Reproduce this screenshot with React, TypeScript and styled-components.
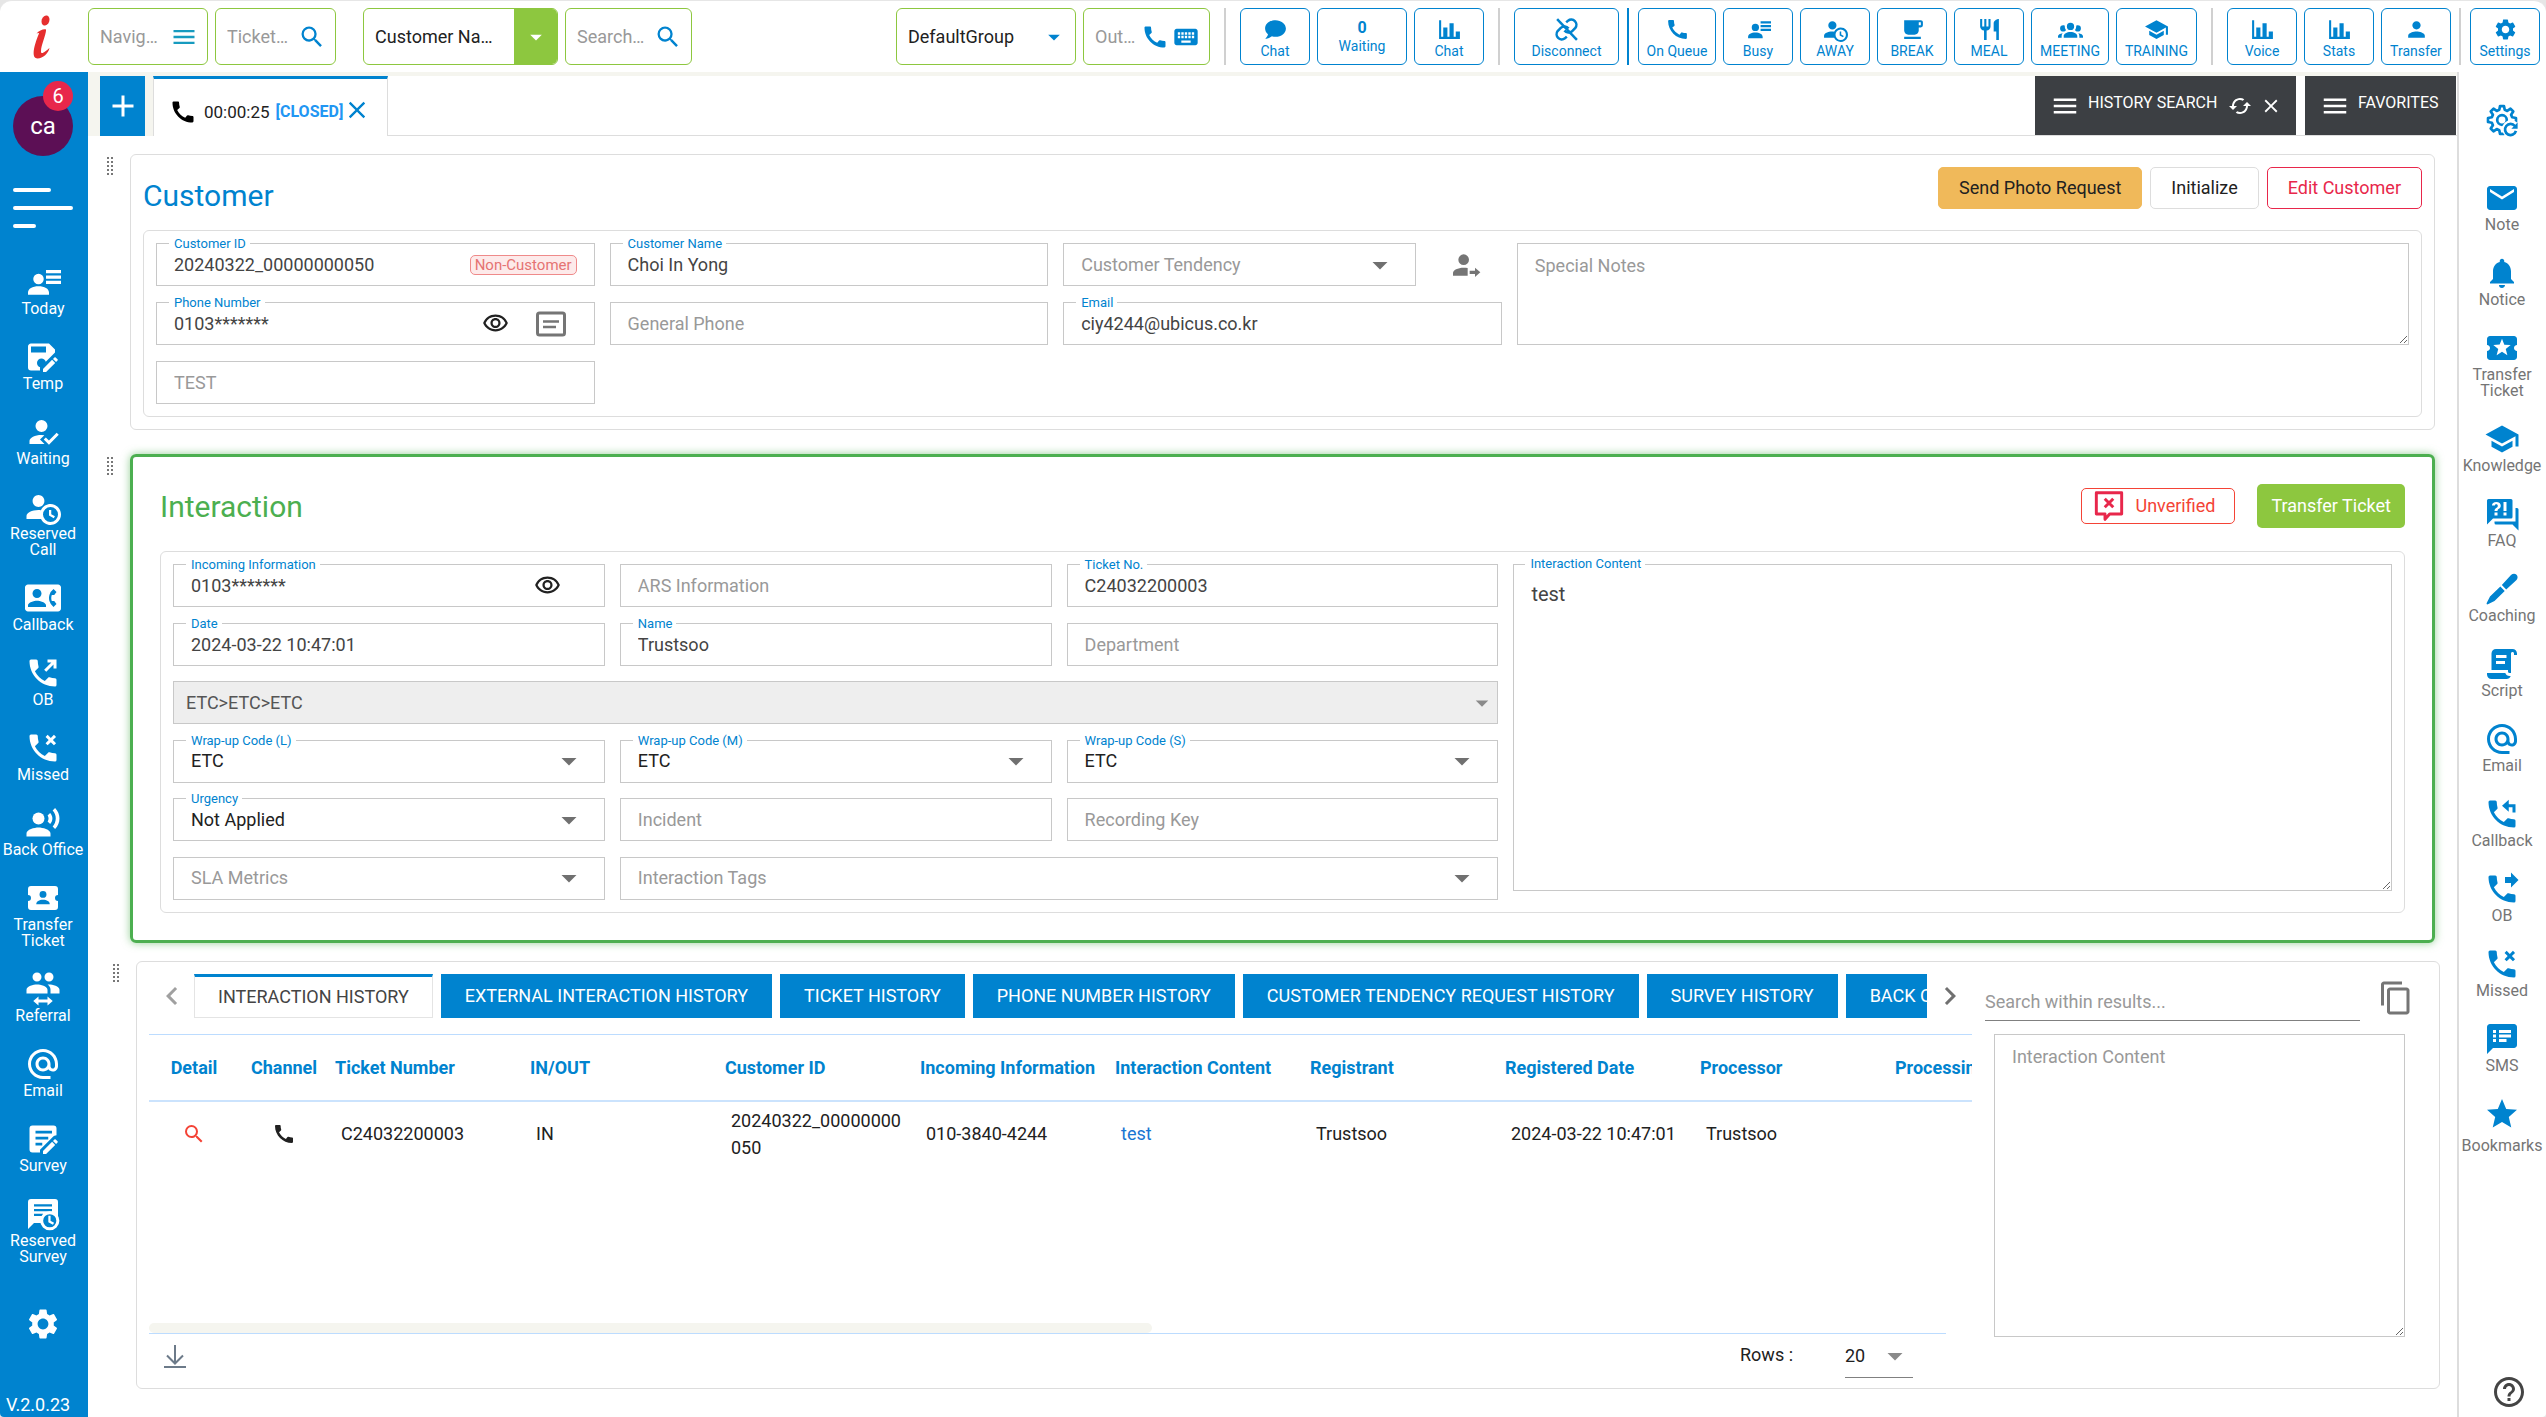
import React, { useId } from "react";
import styled, { createGlobalStyle, css } from "styled-components";
import {
  MdAdd,
  MdAlternateEmail,
  MdArrowDropDown,
  MdCached,
  MdCall,
  MdClose,
  MdContactPhone,
  MdContentCopy,
  MdEmail,
  MdHelpOutline,
  MdKeyboard,
  MdLocalActivity,
  MdLocalCafe,
  MdMenu,
  MdNotifications,
  MdOutlineVisibility,
  MdPerson,
  MdRecordVoiceOver,
  MdRestaurant,
  MdSearch,
  MdSettings,
  MdSpeakerNotes,
  MdStar,
  MdChevronLeft,
  MdChevronRight,
} from "react-icons/md";

const BLUE = "#0083cf";
const LIME = "#8dc73f";
const GREEN = "#4caf50";
const RED = "#e8274b";
const BEIGE = "#f5f5ef";
const LINE = "#dddddd";
const FIELD = "#c8c8c8";

const GlobalStyle = createGlobalStyle`
  * { box-sizing: border-box; }
  body {
    margin: 0;
    background: #e6e6e6;
    color: #212121;
    font-family: Roboto, "Liberation Sans", sans-serif;
    font-size: 18px;
    line-height: 24px;
  }
  button, input, select, textarea { font: inherit; color: inherit; margin: 0; }
  button { cursor: pointer; padding: 0; border: 0; background: none; }
  svg { display: block; flex: none; }
`;

/* ---------- icons ---------- */

const PHONE =
  "M20,15.5C18.8,15.5 17.5,15.3 16.4,14.9H16.1C15.8,14.9 15.6,15 15.4,15.2L13.2,17.4C10.4,15.9 8,13.6 6.6,10.8L8.8,8.6C9.1,8.3 9.2,7.9 9,7.6C8.7,6.5 8.5,5.2 8.5,4A1,1 0 0,0 7.5,3H4A1,1 0 0,0 3,4C3,13.4 10.6,21 20,21A1,1 0 0,0 21,20V16.5A1,1 0 0,0 20,15.5Z";
const PENCIL =
  "M20.04,12.13C19.9,12.13 19.76,12.19 19.65,12.3L18.65,13.3L20.7,15.35L21.7,14.35C21.92,14.14 21.92,13.79 21.7,13.58L20.42,12.3C20.31,12.19 20.18,12.13 20.04,12.13M18.07,13.88L12,19.94V22H14.06L20.12,15.93L18.07,13.88Z";
const TICKET =
  "M4,4A2,2 0 0,0 2,6V10A2,2 0 0,1 4,12A2,2 0 0,1 2,14V18A2,2 0 0,0 4,20H20A2,2 0 0,0 22,18V14A2,2 0 0,1 20,12A2,2 0 0,1 22,10V6A2,2 0 0,0 20,4H4Z";

const paths = {
  chat: "M12,3C17.5,3 22,6.58 22,11C22,15.42 17.5,19 12,19C10.76,19 9.57,18.82 8.47,18.5C5.55,21 2,21 2,21C4.33,18.67 4.7,17.1 4.75,16.5C3.05,15.07 2,13.13 2,11C2,6.58 6.5,3 12,3Z",
  chart: "M22,21H2V3H4V19H6V10H10V19H12V6H16V19H18V14H22V21Z",
  details:
    "M9,6.5A3.5,3.5 0 0,1 9,13.5A3.5,3.5 0 0,1 9,6.5M2,20.5V19C2,16.4 5,14.8 9,14.8C13,14.8 16,16.4 16,19V20.5ZM14,4H24V6.2H14ZM14,7.6H24V9.8H14ZM14,11.2H24V13.4H14Z",
  accountClock:
    "M10.63,14.1C12.23,10.58 16.38,9.03 19.9,10.63C23.42,12.23 24.97,16.38 23.37,19.9C22.24,22.4 19.75,24 17,24C14.3,24 11.83,22.44 10.67,20H1V18C1.06,16.86 1.84,15.93 3.34,15.18C4.84,14.43 6.72,14.04 9,14C9.57,14 10.11,14.05 10.63,14.1V14.1M9,4C10.12,4.03 11.06,4.42 11.81,5.17C12.56,5.92 12.93,6.86 12.93,8C12.93,9.14 12.56,10.08 11.81,10.83C11.06,11.58 10.12,11.95 9,11.95C7.88,11.95 6.94,11.58 6.19,10.83C5.44,10.08 5.07,9.14 5.07,8C5.07,6.86 5.44,5.92 6.19,5.17C6.94,4.42 7.88,4.03 9,4M17,22A5,5 0 0,0 22,17A5,5 0 0,0 17,12A5,5 0 0,0 12,17A5,5 0 0,0 17,22M16,14H17.5V16.82L19.94,18.23L19.19,19.53L16,17.69V14Z",
  accountCheck:
    "M21.1,12.5L22.5,13.91L15.97,20.5L12.5,17L13.9,15.59L15.97,17.67L21.1,12.5M10,17L13,20H3V18C3,15.79 6.58,14 11,14L12.89,14.11L10,17M11,4A4,4 0 0,1 15,8A4,4 0 0,1 11,12A4,4 0 0,1 7,8A4,4 0 0,1 11,4Z",
  accountArrow:
    "M11,4A4,4 0 0,1 11,12A4,4 0 0,1 11,4M14,14.3V20H3V18C3,15.8 6.6,14 11,14C12,14 13.1,14.1 14,14.3M19.5,14L23.5,17.5L19.5,21V18.7H15.5V16.3H19.5Z",
  group:
    "M12,5.5A3.5,3.5 0 0,1 15.5,9A3.5,3.5 0 0,1 12,12.5A3.5,3.5 0 0,1 8.5,9A3.5,3.5 0 0,1 12,5.5M5,8C5.56,8 6.08,8.15 6.53,8.42C6.38,9.85 6.8,11.27 7.66,12.38C7.16,13.34 6.16,14 5,14A3,3 0 0,1 2,11A3,3 0 0,1 5,8M19,8A3,3 0 0,1 22,11A3,3 0 0,1 19,14C17.84,14 16.84,13.34 16.34,12.38C17.2,11.27 17.62,9.85 17.47,8.42C17.92,8.15 18.44,8 19,8M5.5,18.25C5.5,16.18 8.41,14.5 12,14.5C15.59,14.5 18.5,16.18 18.5,18.25V20H5.5V18.25M0,20V18.5C0,17.11 1.89,15.94 4.45,15.6C3.86,16.28 3.5,17.22 3.5,18.25V20H0M24,20H20.5V18.25C20.5,17.22 20.14,16.28 19.55,15.6C22.11,15.94 24,17.11 24,18.5V20Z",
  school: "M12,3L1,9L12,15L21,10.09V17H23V9M5,13.18V17.18L12,21L19,17.18V13.18L12,17L5,13.18Z",
  saveEdit:
    "M10,19L10.14,18.86C8.9,18.5 8,17.36 8,16A3,3 0 0,1 11,13C12.36,13 13.5,13.9 13.86,15.14L20,9V7L16,3H4C2.89,3 2,3.9 2,5V19A2,2 0 0,0 4,21H10V19M4,5H14V9H4V5" + PENCIL,
  phoneOut: PHONE + "M15,3V5H17.59L12.76,9.83L14.17,11.24L19,6.41V9H21V3H15Z",
  phoneMissed:
    PHONE +
    "M15.1,3.2L17.2,5.3L19.3,3.2L20.7,4.6L18.6,6.7L20.7,8.8L19.3,10.2L17.2,8.1L15.1,10.2L13.7,8.8L15.8,6.7L13.7,4.6Z",
  phoneReturn: PHONE + "M16.5,2.5V5.5H21V11H19V7.5H16.5V10.5L12,6.5Z",
  phoneForward: PHONE + "M18,11L23,6L18,1V4H14V8H18V11Z",
  accountSwitch:
    "M16,9C18.33,9 23,10.17 23,12.5V15H17V12.5C17,11 16.19,9.89 15.04,9.05L16,9M8,9C10.33,9 15,10.17 15,12.5V15H1V12.5C1,10.17 5.67,9 8,9M8,7A3,3 0 0,1 5,4A3,3 0 0,1 8,1A3,3 0 0,1 11,4A3,3 0 0,1 8,7M16,7A3,3 0 0,1 13,4A3,3 0 0,1 16,1A3,3 0 0,1 19,4A3,3 0 0,1 16,7M9,17V19H15V17L18.5,20L15,23V21H9V23L5.5,20L9,17Z",
  noteEdit:
    "M5,3H19A2,2 0 0,1 21,5V9.5C20,9.6 19.2,10 18.5,10.7L10,19.1V21H5A2,2 0 0,1 3,19V5A2,2 0 0,1 5,3M7,6.5V8.3H18V6.5ZM7,10.5V12.3H15.5V10.5ZM7,14.5V16.3H11.5V14.5Z" + PENCIL,
  faq: "M18,15H6L2,19V3A1,1 0 0,1 3,2H18A1,1 0 0,1 19,3V14A1,1 0 0,1 18,15M23,9V23L19,19H8A1,1 0 0,1 7,18V17H21V8H22A1,1 0 0,1 23,9M8.19,4C7.32,4 6.62,4.2 6.08,4.59C5.56,5 5.3,5.57 5.31,6.36L5.32,6.39H7.25C7.26,6.09 7.35,5.86 7.53,5.7C7.71,5.55 7.93,5.47 8.19,5.47C8.5,5.47 8.76,5.57 8.94,5.75C9.12,5.94 9.2,6.2 9.2,6.5C9.2,6.82 9.13,7.09 8.97,7.32C8.83,7.55 8.62,7.75 8.36,7.91C7.85,8.25 7.5,8.55 7.31,8.82C7.11,9.08 7,9.5 7,10H9C9,9.69 9.04,9.44 9.13,9.26C9.22,9.08 9.39,8.9 9.64,8.74C10.09,8.5 10.46,8.21 10.75,7.81C11.04,7.41 11.19,7 11.19,6.5C11.19,5.74 10.92,5.13 10.38,4.68C9.85,4.23 9.12,4 8.19,4M7,11V13H9V11H7M13,13H15V11H13V13M13,4V10H15V4H13Z",
  pen: "M11.9,9.4L18,2.7C19.1,1.6 20.7,1.5 21.7,2.5C22.7,3.5 22.6,5.1 21.5,6.2L14.8,12.3ZM10.9,10.4L13.8,13.3L7,20L2.6,22.2C1.9,22.4 1.6,22.1 1.8,21.4L4,17Z",
  script:
    "M17.8,20C17.4,21.2 16.3,22 15,22H5C3.3,22 2,20.7 2,19V18H5L14.2,18C14.6,19.2 15.7,20 17,20H17.8M19,2C20.7,2 22,3.3 22,5V6H20V5C20,4.4 19.6,4 19,4C18.4,4 18,4.4 18,5V18H17C16.4,18 16,17.6 16,17V16H5V5C5,3.3 6.3,2 8,2H19M8,6V8H15V6H8M8,10V12H14V10H8Z",
};

type GlyphProps = { name: keyof typeof paths; size?: number };

const Glyph = ({ name, size = 36 }: GlyphProps) => (
  <svg width={size} height={size} viewBox="0 0 24 24" fill="currentColor" fillRule="evenodd" aria-hidden>
    <path d={paths[name]} />
  </svg>
);

const TicketPersonIcon = () => (
  <svg width={36} height={36} viewBox="0 0 24 24" fill="currentColor" aria-hidden>
    <path d={TICKET} />
    <circle cx="12" cy="9.6" r="2.3" fill={BLUE} />
    <path d="M7.5,16.2C7.5,14.2 9.5,13.2 12,13.2C14.5,13.2 16.5,14.2 16.5,16.2Z" fill={BLUE} />
  </svg>
);

const ReservedSurveyIcon = () => (
  <svg width={36} height={36} viewBox="0 0 24 24" aria-hidden>
    <path d="M2,22V4A2,2 0 0,1 4,2H20A2,2 0 0,1 22,4V18H6Z" fill="currentColor" />
    <path d="M6,6.2H18M6,9.4H18M6,12.6H12" stroke={BLUE} strokeWidth="1.5" />
    <circle cx="16.5" cy="16.5" r="5.4" fill={BLUE} stroke="currentColor" strokeWidth="2" />
    <path d="M16.3,13.2V17L19,18.5" fill="none" stroke="currentColor" strokeWidth="1.5" />
  </svg>
);

const LinkOffIcon = () => (
  <svg width={25} height={25} viewBox="0 0 24 24" fill="none" stroke="currentColor" strokeWidth="2.4" aria-hidden>
    <path d="M10,13a5,5 0 0 0 7.5,.5l3-3a5,5 0 0 0-7-7l-1.8,1.7" />
    <path d="M14,11a5,5 0 0 0-7.5-.5l-3,3a5,5 0 0 0 7,7l1.8-1.7" />
    <path d="M3,2L22,22" />
  </svg>
);

/* outline of an eight-toothed wheel round (12, 12) */
const wheel = Array.from({ length: 8 }, (_, tooth) =>
  [
    [-15, 7],
    [-8, 9.4],
    [8, 9.4],
    [15, 7],
  ].map(([offset, r]) => {
    const a = ((tooth * 45 + offset - 90) * Math.PI) / 180;
    return `${(12 + r * Math.cos(a)).toFixed(2)},${(12 + r * Math.sin(a)).toFixed(2)}`;
  })
)
  .flat()
  .join(" ");

const GearRefreshIcon = () => (
  <svg width={36} height={36} viewBox="0 0 24 24" fill="none" stroke="currentColor" strokeWidth="1.8" aria-hidden>
    <polygon points={wheel} strokeLinejoin="round" />
    <circle cx="12" cy="12" r="3.2" />
    <circle cx="18" cy="18" r="6" fill="#fff" stroke="none" />
    <path d="M20.6,16A3.7,3.7 0 1 0 21.3,19.3" />
    <path d="M22.4,13.6V17.8H18.2Z" fill="currentColor" stroke="none" />
  </svg>
);

const UnverifiedIcon = () => (
  <svg width={32} height={32} viewBox="0 0 24 24" fill="none" stroke={RED} strokeWidth="2.2" aria-hidden>
    <path d="M2.5,2H21.5V18H12.5L9,22V18H2.5Z" strokeLinejoin="round" />
    <path d="M8.8,6.5L15.2,13M15.2,6.5L8.8,13" />
  </svg>
);

const CardIcon = () => (
  <svg width={32} height={28} viewBox="0 0 32 28" fill="none" stroke="#757575" strokeWidth="3" aria-hidden>
    <rect x="2.5" y="3" width="27" height="22" rx="2" />
    <path d="M8,11.5H24M8,17H21" strokeWidth="2.4" />
  </svg>
);

const DownloadIcon = () => (
  <svg width={24} height={24} viewBox="0 0 24 24" fill="none" stroke="#6c7a89" strokeWidth="2" aria-hidden>
    <path d="M12,1V19M4,11.5L12,19.5L20,11.5M1,23H23" />
  </svg>
);

const LogoMark = () => (
  <svg width={24} height={44} viewBox="0 0 24 44" aria-label="Company logo">
    <ellipse cx="14.5" cy="5.5" rx="3.8" ry="5.2" transform="rotate(18 14.5 5.5)" fill="#e62e2e" />
    <path
      d="M5.5,18.5C8,15.5 13,13.5 15,14.5C15.5,19 10,30 10,36.5C10,40.5 15,36 18.5,33C17.5,38 12,43.5 6.5,43.5C-1,43.5 4,28 8,18.5C7.5,17.8 6.5,18.2 5.5,18.5Z"
      fill="#e62e2e"
    />
  </svg>
);

const MenuLines = () => (
  <svg width={60} height={40} viewBox="0 0 60 40" stroke="#fff" strokeWidth="4" strokeLinecap="round" aria-hidden>
    <path d="M2,2H36M2,20H58M2,38H21" />
  </svg>
);

const DragDots = () => (
  <svg width={8} height={20} viewBox="0 0 8 20" fill="#777" aria-hidden>
    {[0, 4, 8, 12, 16].map((y) => (
      <React.Fragment key={y}>
        <rect x="0" y={y} width="2" height="2" />
        <rect x="4" y={y} width="2" height="2" />
      </React.Fragment>
    ))}
  </svg>
);

/* ---------- frame ---------- */

const Page = styled.div`
  display: flex;
  flex-direction: column;
  min-height: 100vh;
  border-top: 1px solid #e6e6e6;
  border-radius: 12px 12px 4px 4px;
  background: #fff;
  overflow: hidden;
`;

const Header = styled.header`
  display: flex;
  align-items: center;
  gap: 7px;
  height: 71px;
  padding: 0 6px 0 0;
`;

const Logo = styled.a`
  display: flex;
  justify-content: center;
  width: 81px;
  padding-left: 4px;
`;

const TopBox = styled.div<{ $width: number; $push?: boolean; $gap?: boolean }>`
  position: relative;
  display: flex;
  align-items: center;
  width: ${(p) => p.$width}px;
  height: 57px;
  padding-right: 8px;
  border: 1px solid ${LIME};
  border-radius: 6px;
  ${(p) => p.$gap && css`margin-left: 20px;`}
  ${(p) => p.$push && css`margin-left: auto;`}
`;

const TopInput = styled.input`
  flex: 1;
  min-width: 0;
  height: 100%;
  padding: 0 0 0 11px;
  border: 0;
  outline: 0;
  background: none;
  text-overflow: ellipsis;
  &::placeholder { color: #999; opacity: 1; }
`;

const TopIcon = styled.button<{ $color?: string }>`
  display: flex;
  padding: 0 1px 0 2px;
  color: ${(p) => p.$color ?? BLUE};
`;

const TopSelect = styled.select`
  position: absolute;
  inset: 0;
  width: 100%;
  padding: 0 0 0 11px;
  border: 0;
  outline: 0;
  appearance: none;
  background: none;
`;

const SelectArrow = styled.span<{ $filled?: boolean }>`
  display: flex;
  align-items: center;
  justify-content: center;
  align-self: stretch;
  width: 43px;
  margin: 0 -8px 0 auto;
  border-radius: 0 5px 5px 0;
  color: ${(p) => (p.$filled ? "#fff" : BLUE)};
  background: ${(p) => (p.$filled ? LIME : "transparent")};
`;

const ToolButton = styled.button<{ $width?: number }>`
  display: flex;
  flex-direction: column;
  align-items: center;
  justify-content: center;
  width: ${(p) => p.$width ?? 70}px;
  height: 57px;
  border: 1px solid ${BLUE};
  border-radius: 6px;
  color: ${BLUE};
  font-size: 14px;
  line-height: 18px;
  svg { margin-top: 3px; }
  strong { font-size: 16px; font-weight: 700; }
`;

const Divider = styled.span<{ $blue?: boolean; $wide?: boolean }>`
  width: 2px;
  height: 57px;
  margin: 0 ${(p) => (p.$wide ? "7px" : "2px 0 1px")};
  background: ${(p) => (p.$blue ? BLUE : "#d0d0d0")};
`;

const Body = styled.div`
  display: flex;
  flex: 1;
`;

const SideBar = styled.nav`
  display: flex;
  flex-direction: column;
  align-items: center;
  width: 88px;
  padding: 24px 2px 0 0;
  background: ${BLUE};
  color: #fff;
`;

const Avatar = styled.button`
  position: relative;
  width: 60px;
  height: 60px;
  margin-bottom: 32px;
  border-radius: 50%;
  background: #5c0f55;
  color: #fff;
  font-size: 24px;
`;

const Badge = styled.span`
  position: absolute;
  top: -15px;
  right: 0;
  width: 30px;
  height: 30px;
  border-radius: 50%;
  background: ${RED};
  font-size: 20px;
  line-height: 30px;
`;

const MenuButton = styled.button`
  margin-bottom: 36px;
`;

const NavItem = styled.button<{ $rail?: boolean; $gap?: number }>`
  display: flex;
  flex-direction: column;
  align-items: center;
  gap: ${(p) => p.$gap ?? 1}px;
  width: 100%;
  margin-bottom: 22px;
  color: ${(p) => (p.$rail ? "#757575" : "#fff")};
  font-size: 16px;
  line-height: 16px;
  svg { color: ${(p) => (p.$rail ? BLUE : "#fff")}; }
`;

const SideSettings = styled.button`
  margin-top: 19px;
`;

const Version = styled.span`
  margin: auto auto 0 6px;
  line-height: 24px;
`;

const Rail = styled.nav`
  display: flex;
  flex-direction: column;
  align-items: center;
  width: 89px;
  padding: 30px 1px 7px 0;
  border-left: 2px solid ${LINE};
`;

const RailTop = styled.button`
  margin-bottom: 42px;
  color: ${BLUE};
`;

const HelpButton = styled.button`
  margin: auto 18px 0 auto;
  color: #444;
`;

const Main = styled.main`
  flex: 1;
  min-width: 0;
`;

/* ---------- ticket tabs ---------- */

const TicketBar = styled.div`
  display: flex;
  height: 64px;
  border-top: 4px solid ${BEIGE};
`;

const NewTab = styled.div`
  padding: 0 8px 0 12px;
  background: ${BEIGE};
`;

const AddButton = styled.button`
  display: flex;
  align-items: center;
  justify-content: center;
  width: 45px;
  height: 60px;
  background: ${BLUE};
  color: #fff;
`;

const TicketTab = styled.div`
  display: flex;
  align-items: center;
  width: 235px;
  padding: 8px 0 0 15px;
  border: 1px solid ${LINE};
  border-top: 3px solid ${BLUE};
  border-bottom: 0;
  font-size: 17px;
  svg { color: #000; }
  time { margin: 0 6px 0 7px; }
  b { font-size: 16px; font-weight: 700; color: #2196f3; }
`;

const TabClose = styled.button`
  margin-bottom: 4px;
  svg { color: ${BLUE}; }
`;

const TicketFill = styled.div`
  display: flex;
  flex: 1;
  justify-content: flex-end;
  gap: 9px;
  padding-right: 1px;
  border-bottom: 1px solid ${LINE};
`;

const DarkPanel = styled.div<{ $width: number }>`
  display: flex;
  align-items: center;
  gap: 8px;
  width: ${(p) => p.$width}px;
  padding-left: 15px;
  background: #3c3f43;
  color: #fff;
  font-size: 16px;
  button { color: #fff; }
  span { margin-right: 3px; padding-bottom: 6px; }
`;

/* ---------- sections ---------- */

const Workspace = styled.div`
  padding-top: 18px;
`;

const Section = styled.section<{ $wide?: boolean }>`
  display: flex;
  padding: 0 ${(p) => (p.$wide ? 17 : 22)}px 0 ${(p) => (p.$wide ? 25 : 19)}px;
  margin-bottom: ${(p) => (p.$wide ? 0 : 24)}px;
  margin-top: ${(p) => (p.$wide ? -6 : 0)}px;
`;

const Handle = styled.span`
  width: 23px;
  padding-top: 3px;
`;

const Panel = styled.div<{ $active?: boolean }>`
  flex: 1;
  min-width: 0;
  padding: 12px;
  border: 1px solid ${LINE};
  border-radius: 6px;
  ${(p) =>
    p.$active &&
    css`
      padding: 0 27px 27px;
      border: 3px solid ${GREEN};
      box-shadow: 0 0 8px rgba(76, 175, 80, 0.6);
    `}
`;

const PanelHead = styled.div<{ $active?: boolean }>`
  display: flex;
  align-items: ${(p) => (p.$active ? "center" : "flex-start")};
  gap: ${(p) => (p.$active ? 22 : 8)}px;
  height: ${(p) => (p.$active ? 94 : 63)}px;
  padding-top: ${(p) => (p.$active ? 4 : 0)}px;
`;

const Title = styled.h2<{ $active?: boolean }>`
  margin: 0 auto 0 0;
  padding-top: ${(p) => (p.$active ? 1 : 11)}px;
  color: ${(p) => (p.$active ? GREEN : BLUE)};
  font-size: 30px;
  font-weight: 400;
  line-height: 36px;
`;

const ActionButton = styled.button<{ $tone: "amber" | "plain" | "danger" }>`
  height: 42px;
  padding: 0 20px;
  border: 1px solid ${(p) => ({ amber: "#f0b95a", plain: LINE, danger: RED })[p.$tone]};
  border-radius: 5px;
  background: ${(p) => (p.$tone === "amber" ? "#f0b95a" : "#fff")};
  color: ${(p) => (p.$tone === "danger" ? RED : "#212121")};
`;

const UnverifiedButton = styled.button`
  display: flex;
  align-items: center;
  gap: 11px;
  height: 36px;
  padding: 0 19px 0 11px;
  border: 1px solid #f44336;
  border-radius: 5px;
  color: #f44336;
`;

const TransferButton = styled.button`
  height: 44px;
  padding: 0 14px;
  border-radius: 5px;
  background: ${LIME};
  color: #fff;
`;

const FormGrid = styled.div<{ $minHeight: number }>`
  display: grid;
  grid-template-columns: repeat(5, 1fr);
  grid-auto-rows: 43px;
  align-content: space-between;
  column-gap: 15px;
  min-height: ${(p) => p.$minHeight}px;
  padding: 12px;
  border: 1px solid ${LINE};
  border-radius: 6px;
`;

const FieldBox = styled.div<{ $span?: number; $disabled?: boolean }>`
  position: relative;
  display: flex;
  flex: 1;
  align-items: center;
  grid-column: span ${(p) => p.$span ?? 1};
  border: 1px solid ${FIELD};
  background: ${(p) => (p.$disabled ? "#eeeeee" : "#fff")};
`;

const FloatLabel = styled.label`
  position: absolute;
  top: -8px;
  left: 12px;
  padding: 0 4px 0 5px;
  background: #fff;
  color: ${BLUE};
  font-size: 13px;
  line-height: 16px;
`;

const TextInput = styled.input`
  flex: 1;
  min-width: 0;
  height: 100%;
  padding: 0 0 0 17px;
  border: 0;
  outline: 0;
  background: none;
  color: #444;
  &::placeholder { color: #999; opacity: 1; }
`;

const SelectInput = styled.select<{ $empty?: boolean; $disabled?: boolean }>`
  position: absolute;
  inset: 0;
  width: 100%;
  padding: 0 0 0 ${(p) => (p.$disabled ? 12 : 17)}px;
  border: 0;
  outline: 0;
  opacity: 1;
  appearance: none;
  background: none;
  color: ${(p) => (p.$empty ? "#999" : p.$disabled ? "#555" : "#212121")};
`;

const Caret = styled.span<{ $tight?: boolean }>`
  margin: 0 ${(p) => (p.$tight ? 0 : 17)}px 0 auto;
  color: ${(p) => (p.$tight ? "#8a8a8a" : "#707070")};
  pointer-events: none;
`;

const Tag = styled.span`
  margin-right: 17px;
  padding: 0 4px;
  border: 1px solid #ef8a8a;
  border-radius: 5px;
  background: #fdeaea;
  color: #e57373;
  font-size: 15px;
  line-height: 18px;
`;

const FieldButton = styled.button<{ $right: number }>`
  margin-right: ${(p) => p.$right}px;
`;

const SplitCell = styled.div`
  display: flex;
`;

const AssignButton = styled.button`
  display: flex;
  align-items: center;
  justify-content: center;
  width: 86px;
  padding-left: 12px;
  color: #757575;
`;

const AreaCell = styled.div<{ $rows: number }>`
  position: relative;
  display: flex;
  grid-column: 4 / span 2;
  grid-row: 1 / span ${(p) => p.$rows};
`;

const TextArea = styled.textarea<{ $height?: number; $large?: boolean }>`
  width: 100%;
  height: ${(p) => (p.$height ? `${p.$height}px` : "100%")};
  padding: ${(p) => (p.$large ? 17 : 10)}px 17px;
  border: 1px solid ${FIELD};
  outline: 0;
  resize: vertical;
  background: #fff;
  color: #444;
  font-size: ${(p) => (p.$large ? 20 : 18)}px;
  &::placeholder { color: #999; opacity: 1; }
`;

/* ---------- history ---------- */

const HistoryPanel = styled(Panel)`
  display: flex;
  gap: 13px;
  padding: 12px 12px 0;
`;

const HistoryMain = styled.div`
  flex: 1;
  min-width: 0;
`;

const TabRow = styled.div`
  display: flex;
  height: 60px;
`;

const TabScroll = styled.button<{ $dim?: boolean }>`
  display: flex;
  align-items: center;
  justify-content: center;
  width: 45px;
  height: 44px;
  color: ${(p) => (p.$dim ? "#a0a0a0" : "#707070")};
`;

const Tabs = styled.div`
  display: flex;
  flex: 1;
  gap: 8px;
  min-width: 0;
  overflow: hidden;
`;

const Tab = styled.button<{ $active?: boolean }>`
  flex: none;
  height: 44px;
  padding: 0 24px;
  background: ${BLUE};
  color: #fff;
  white-space: nowrap;
  ${(p) =>
    p.$active &&
    css`
      padding: 0 23px;
      border: 1px solid #e4e4e4;
      border-top: 3px solid ${BLUE};
      background: #fff;
      color: #444;
    `}
`;

const TableView = styled.div`
  min-height: 289px;
  border-top: 1px solid #bcdcff;
  overflow: hidden;
`;

const Table = styled.table`
  width: 1935px;
  table-layout: fixed;
  border-collapse: collapse;
  text-align: left;
  th {
    height: 66px;
    padding: 0 0 0 6px;
    border-bottom: 2px solid #cbe3fd;
    color: ${BLUE};
    font-weight: 700;
    white-space: nowrap;
  }
  td {
    height: 64px;
    padding: 4px 12px;
    line-height: 27px;
    word-break: break-all;
  }
  th:nth-child(-n + 2) { padding: 0; text-align: center; }
  td svg { margin: 0 auto; }
  a { color: #1976d2; text-decoration: none; }
`;

const ScrollThumb = styled.div`
  width: 55%;
  height: 10px;
  border-radius: 5px;
  background: ${BEIGE};
`;

const TableFoot = styled.div`
  display: flex;
  align-items: flex-start;
  height: 55px;
  margin-right: 26px;
  padding: 0 33px 0 14px;
  border-top: 1px solid #bcdcff;
  label { margin: 0 52px 0 auto; line-height: 42px; }
  > button { margin-top: 10px; }
`;

const RowsBox = styled.div`
  position: relative;
  display: flex;
  align-items: center;
  width: 68px;
  height: 44px;
  border-bottom: 1px solid #808080;
`;

const RowsSelect = styled(SelectInput)`
  padding: 0;
`;

const HistorySide = styled.div`
  width: 442px;
`;

const SearchRow = styled.div`
  display: flex;
  align-items: flex-start;
  gap: 18px;
  height: 60px;
`;

const ResultSearch = styled.input`
  width: 375px;
  height: 47px;
  padding: 8px 0 0;
  border: 0;
  border-bottom: 1px solid #808080;
  outline: 0;
  &::placeholder { color: #999; opacity: 1; }
`;

const CopyButton = styled.button`
  padding-top: 6px;
  color: #757575;
`;

const SideArea = styled.div`
  padding: 0 22px 0 9px;
`;

/* ---------- building blocks ---------- */

type FieldProps = {
  label: string;
  value?: string;
  span?: number;
  children?: React.ReactNode;
};

const Field = ({ label, value, span, children }: FieldProps) => {
  const id = useId();
  return (
    <FieldBox $span={span}>
      {value && <FloatLabel htmlFor={id}>{label}</FloatLabel>}
      <TextInput id={id} defaultValue={value} placeholder={label} aria-label={label} />
      {children}
    </FieldBox>
  );
};

const SelectField = ({ label, value, span, disabled }: FieldProps & { disabled?: boolean }) => {
  const id = useId();
  return (
    <FieldBox $span={span} $disabled={disabled}>
      <SelectInput id={id} aria-label={label} $empty={!value} $disabled={disabled} disabled={disabled}>
        <option>{value ?? label}</option>
      </SelectInput>
      {value && !disabled && <FloatLabel htmlFor={id}>{label}</FloatLabel>}
      <Caret $tight={disabled}>
        <MdArrowDropDown size={disabled ? 30 : 36} />
      </Caret>
    </FieldBox>
  );
};

const sideItems: { label: string; icon: React.ReactNode }[] = [
  { label: "Today", icon: <Glyph name="details" /> },
  { label: "Temp", icon: <Glyph name="saveEdit" /> },
  { label: "Waiting", icon: <Glyph name="accountCheck" /> },
  { label: "Reserved Call", icon: <Glyph name="accountClock" /> },
  { label: "Callback", icon: <MdContactPhone size={36} /> },
  { label: "OB", icon: <Glyph name="phoneOut" /> },
  { label: "Missed", icon: <Glyph name="phoneMissed" /> },
  { label: "Back Office", icon: <MdRecordVoiceOver size={36} /> },
  { label: "Transfer Ticket", icon: <TicketPersonIcon /> },
  { label: "Referral", icon: <Glyph name="accountSwitch" /> },
  { label: "Email", icon: <MdAlternateEmail size={36} /> },
  { label: "Survey", icon: <Glyph name="noteEdit" /> },
  { label: "Reserved Survey", icon: <ReservedSurveyIcon /> },
];

const railItems: { label: string; icon: React.ReactNode; gap?: number }[] = [
  { label: "Note", icon: <MdEmail size={36} /> },
  { label: "Notice", icon: <MdNotifications size={36} /> },
  { label: "Transfer Ticket", icon: <MdLocalActivity size={36} /> },
  { label: "Knowledge", icon: <Glyph name="school" /> },
  { label: "FAQ", icon: <Glyph name="faq" /> },
  { label: "Coaching", icon: <Glyph name="pen" /> },
  { label: "Script", icon: <Glyph name="script" /> },
  { label: "Email", icon: <MdAlternateEmail size={36} /> },
  { label: "Callback", icon: <Glyph name="phoneReturn" /> },
  { label: "OB", icon: <Glyph name="phoneForward" /> },
  { label: "Missed", icon: <Glyph name="phoneMissed" /> },
  { label: "SMS", icon: <MdSpeakerNotes size={36} /> },
  { label: "Bookmarks", icon: <MdStar size={36} />, gap: 6 },
];

const states: { label: string; icon: React.ReactNode; width?: number }[] = [
  { label: "On Queue", icon: <MdCall size={25} />, width: 78 },
  { label: "Busy", icon: <Glyph name="details" size={25} /> },
  { label: "AWAY", icon: <Glyph name="accountClock" size={25} /> },
  { label: "BREAK", icon: <MdLocalCafe size={25} /> },
  { label: "MEAL", icon: <MdRestaurant size={25} /> },
  { label: "MEETING", icon: <Glyph name="group" size={25} />, width: 78 },
  { label: "TRAINING", icon: <Glyph name="school" size={25} />, width: 81 },
];

const historyTabs = [
  "INTERACTION HISTORY",
  "EXTERNAL INTERACTION HISTORY",
  "TICKET HISTORY",
  "PHONE NUMBER HISTORY",
  "CUSTOMER TENDENCY REQUEST HISTORY",
  "SURVEY HISTORY",
  "BACK OFFICE HISTORY",
];

const columns = [
  "Detail",
  "Channel",
  "Ticket Number",
  "IN/OUT",
  "Customer ID",
  "Incoming Information",
  "Interaction Content",
  "Registrant",
  "Registered Date",
  "Processor",
  "Processing Date",
];

export default function App() {
  return (
    <>
      <GlobalStyle />
      <Page>
        <Header>
          <Logo href="#">
            <LogoMark />
          </Logo>
          <TopBox $width={120}>
            <TopInput placeholder="Navig…" aria-label="Navigation" />
            <TopIcon $color="#179bbf" aria-label="Menu">
              <MdMenu size={28} />
            </TopIcon>
          </TopBox>
          <TopBox $width={121}>
            <TopInput placeholder="Ticket…" aria-label="Ticket" />
            <TopIcon aria-label="Find ticket">
              <MdSearch size={28} />
            </TopIcon>
          </TopBox>
          <TopBox $width={195} $gap>
            <SelectArrow $filled>
              <MdArrowDropDown size={28} />
            </SelectArrow>
            <TopSelect aria-label="Search by">
              <option>Customer Na…</option>
            </TopSelect>
          </TopBox>
          <TopBox $width={127}>
            <TopInput placeholder="Search…" aria-label="Search" />
            <TopIcon aria-label="Search">
              <MdSearch size={28} />
            </TopIcon>
          </TopBox>
          <TopBox $width={180} $push>
            <SelectArrow>
              <MdArrowDropDown size={28} />
            </SelectArrow>
            <TopSelect aria-label="Group">
              <option>DefaultGroup</option>
            </TopSelect>
          </TopBox>
          <TopBox $width={127}>
            <TopInput placeholder="Out…" aria-label="Outbound" />
            <TopIcon aria-label="Call">
              <MdCall size={28} />
            </TopIcon>
            <TopIcon aria-label="Keypad">
              <MdKeyboard size={28} />
            </TopIcon>
          </TopBox>
          <Divider $wide />
          <ToolButton>
            <Glyph name="chat" size={25} />
            Chat
          </ToolButton>
          <ToolButton $width={90}>
            <strong>0</strong>
            Waiting
          </ToolButton>
          <ToolButton>
            <Glyph name="chart" size={25} />
            Chat
          </ToolButton>
          <Divider $wide />
          <ToolButton $width={105}>
            <LinkOffIcon />
            Disconnect
          </ToolButton>
          <Divider $blue />
          {states.map((s) => (
            <ToolButton key={s.label} $width={s.width}>
              {s.icon}
              {s.label}
            </ToolButton>
          ))}
          <Divider $wide />
          <ToolButton>
            <Glyph name="chart" size={25} />
            Voice
          </ToolButton>
          <ToolButton>
            <Glyph name="chart" size={25} />
            Stats
          </ToolButton>
          <ToolButton>
            <MdPerson size={25} />
            Transfer
          </ToolButton>
          <Divider />
          <ToolButton>
            <MdSettings size={25} />
            Settings
          </ToolButton>
        </Header>

        <Body>
          <SideBar>
            <Avatar>
              ca
              <Badge>6</Badge>
            </Avatar>
            <MenuButton aria-label="Toggle menu">
              <MenuLines />
            </MenuButton>
            {sideItems.map((i) => (
              <NavItem key={i.label}>
                {i.icon}
                {i.label}
              </NavItem>
            ))}
            <SideSettings aria-label="Settings">
              <MdSettings size={36} />
            </SideSettings>
            <Version>V.2.0.23</Version>
          </SideBar>

          <Main>
            <TicketBar>
              <NewTab>
                <AddButton aria-label="New tab">
                  <MdAdd size={36} />
                </AddButton>
              </NewTab>
              <TicketTab>
                <MdCall size={28} />
                <time>00:00:25</time>
                <b>[CLOSED]</b>
                <TabClose aria-label="Close tab">
                  <MdClose size={28} />
                </TabClose>
              </TicketTab>
              <TicketFill>
                <DarkPanel $width={261}>
                  <MdMenu size={30} />
                  <span>HISTORY SEARCH</span>
                  <button aria-label="Refresh">
                    <MdCached size={24} />
                  </button>
                  <button aria-label="Close history search">
                    <MdClose size={22} />
                  </button>
                </DarkPanel>
                <DarkPanel $width={151}>
                  <MdMenu size={30} />
                  <span>FAVORITES</span>
                </DarkPanel>
              </TicketFill>
            </TicketBar>

            <Workspace>
              <Section>
                <Handle>
                  <DragDots />
                </Handle>
                <Panel>
                  <PanelHead>
                    <Title>Customer</Title>
                    <ActionButton $tone="amber">Send Photo Request</ActionButton>
                    <ActionButton $tone="plain">Initialize</ActionButton>
                    <ActionButton $tone="danger">Edit Customer</ActionButton>
                  </PanelHead>
                  <FormGrid $minHeight={187}>
                    <Field label="Customer ID" value="20240322_00000000050">
                      <Tag>Non-Customer</Tag>
                    </Field>
                    <Field label="Customer Name" value="Choi In Yong" />
                    <SplitCell>
                      <SelectField label="Customer Tendency" />
                      <AssignButton aria-label="Assign customer">
                        <Glyph name="accountArrow" size={32} />
                      </AssignButton>
                    </SplitCell>
                    <AreaCell $rows={2}>
                      <TextArea placeholder="Special Notes" aria-label="Special Notes" />
                    </AreaCell>
                    <Field label="Phone Number" value="0103*******">
                      <FieldButton $right={26} aria-label="Show phone number">
                        <MdOutlineVisibility size={27} />
                      </FieldButton>
                      <FieldButton $right={27} aria-label="Send message">
                        <CardIcon />
                      </FieldButton>
                    </Field>
                    <Field label="General Phone" />
                    <Field label="Email" value="ciy4244@ubicus.co.kr" />
                    <Field label="TEST" />
                  </FormGrid>
                </Panel>
              </Section>

              <Section>
                <Handle>
                  <DragDots />
                </Handle>
                <Panel $active>
                  <PanelHead $active>
                    <Title $active>Interaction</Title>
                    <UnverifiedButton>
                      <UnverifiedIcon />
                      Unverified
                    </UnverifiedButton>
                    <TransferButton>Transfer Ticket</TransferButton>
                  </PanelHead>
                  <FormGrid $minHeight={362}>
                    <Field label="Incoming Information" value="0103*******">
                      <FieldButton $right={43} aria-label="Show incoming number">
                        <MdOutlineVisibility size={27} />
                      </FieldButton>
                    </Field>
                    <Field label="ARS Information" />
                    <Field label="Ticket No." value="C24032200003" />
                    <AreaCell $rows={6}>
                      <FloatLabel htmlFor="interaction-content">Interaction Content</FloatLabel>
                      <TextArea id="interaction-content" $height={327} $large defaultValue="test" />
                    </AreaCell>
                    <Field label="Date" value="2024-03-22 10:47:01" />
                    <Field label="Name" value="Trustsoo" />
                    <Field label="Department" />
                    <SelectField label="Wrap-up Code" value="ETC>ETC>ETC" span={3} disabled />
                    <SelectField label="Wrap-up Code (L)" value="ETC" />
                    <SelectField label="Wrap-up Code (M)" value="ETC" />
                    <SelectField label="Wrap-up Code (S)" value="ETC" />
                    <SelectField label="Urgency" value="Not Applied" />
                    <Field label="Incident" />
                    <Field label="Recording Key" />
                    <SelectField label="SLA Metrics" />
                    <SelectField label="Interaction Tags" span={2} />
                  </FormGrid>
                </Panel>
              </Section>

              <Section $wide>
                <Handle>
                  <DragDots />
                </Handle>
                <HistoryPanel>
                  <HistoryMain>
                    <TabRow>
                      <TabScroll $dim aria-label="Previous tabs">
                        <MdChevronLeft size={36} />
                      </TabScroll>
                      <Tabs>
                        {historyTabs.map((t, i) => (
                          <Tab key={t} $active={i === 0}>
                            {t}
                          </Tab>
                        ))}
                      </Tabs>
                      <TabScroll aria-label="Next tabs">
                        <MdChevronRight size={36} />
                      </TabScroll>
                    </TabRow>
                    <TableView>
                      <Table>
                        <colgroup>
                          {columns.map((c, i) => (
                            <col key={c} width={i < 2 ? 90 : 195} />
                          ))}
                        </colgroup>
                        <thead>
                          <tr>
                            {columns.map((c) => (
                              <th key={c}>{c}</th>
                            ))}
                          </tr>
                        </thead>
                        <tbody>
                          <tr>
                            <td>
                              <MdSearch size={24} color="#f44336" />
                            </td>
                            <td>
                              <MdCall size={24} />
                            </td>
                            <td>C24032200003</td>
                            <td>IN</td>
                            <td>20240322_00000000050</td>
                            <td>010-3840-4244</td>
                            <td>
                              <a href="#">test</a>
                            </td>
                            <td>Trustsoo</td>
                            <td>2024-03-22 10:47:01</td>
                            <td>Trustsoo</td>
                            <td />
                          </tr>
                        </tbody>
                      </Table>
                    </TableView>
                    <ScrollThumb />
                    <TableFoot>
                      <button aria-label="Download">
                        <DownloadIcon />
                      </button>
                      <label htmlFor="rows">Rows :</label>
                      <RowsBox>
                        <RowsSelect id="rows">
                          <option>20</option>
                        </RowsSelect>
                        <Caret $tight>
                          <MdArrowDropDown size={36} />
                        </Caret>
                      </RowsBox>
                    </TableFoot>
                  </HistoryMain>
                  <HistorySide>
                    <SearchRow>
                      <ResultSearch placeholder="Search within results..." aria-label="Search within results" />
                      <CopyButton aria-label="Copy">
                        <MdContentCopy size={36} />
                      </CopyButton>
                    </SearchRow>
                    <SideArea>
                      <TextArea $height={303} placeholder="Interaction Content" aria-label="Interaction Content" />
                    </SideArea>
                  </HistorySide>
                </HistoryPanel>
              </Section>
            </Workspace>
          </Main>

          <Rail>
            <RailTop aria-label="Reload settings">
              <GearRefreshIcon />
            </RailTop>
            {railItems.map((i) => (
              <NavItem key={i.label} $rail $gap={i.gap}>
                {i.icon}
                {i.label}
              </NavItem>
            ))}
            <HelpButton aria-label="Help">
              <MdHelpOutline size={36} />
            </HelpButton>
          </Rail>
        </Body>
      </Page>
    </>
  );
}
